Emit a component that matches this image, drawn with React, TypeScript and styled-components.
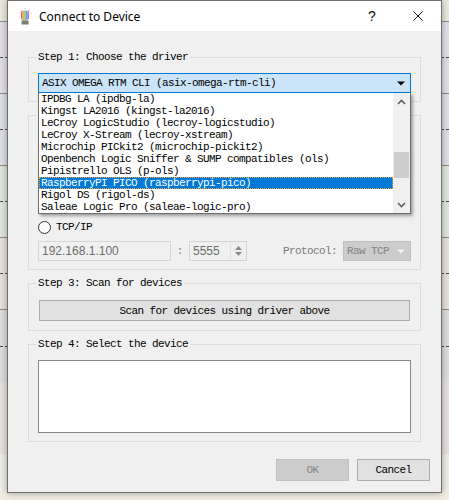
import React from "react";
import styled, {createGlobalStyle} from "styled-components";

const GlobalStyle = createGlobalStyle`
  html, body {
    margin: 0;
    padding: 0;
  }
  body {
    width: 449px;
    height: 500px;
    overflow: hidden;
    font-family: "Liberation Mono", monospace;
  }
`

// Desktop behind the dialog
const Desktop = styled.div`
  position: relative;
  width: 449px;
  height: 500px;
  display: flex;
  flex-direction: column;
  background: #f0eee3;
`

const TopStrip = styled.div`
  height: 22px;
  box-sizing: border-box;
  background: #ebe8dc;
  border-bottom: 1px solid #8c8c8c;
`

const Band = styled.div<{$color: string; $solid?: boolean}>`
  height: 72px;
  box-sizing: border-box;
  background: ${({$color}) => $color};
  border-bottom: ${({$solid}) => ($solid ? "1px solid #8c8c8c" : "none")};
  display: flex;
  flex-direction: column;
  justify-content: center;
`

const Dash = styled.div`
  border-top: 1px dashed #4a4a4a;
`

// Dialog window
const Dialog = styled.div`
  position: absolute;
  left: 7px;
  top: 0;
  width: 435px;
  height: 493px;
  box-sizing: border-box;
  border: 1px solid #6f6f6f;
  background: #f0f0f0;
  display: flex;
  flex-direction: column;
  box-shadow: 0 0 7px rgba(0, 0, 0, 0.35);
`

const TitleBar = styled.div`
  height: 30px;
  background: #ffffff;
  display: flex;
  align-items: center;
`

const TitleIcon = styled.svg`
  margin-left: 9px;
  flex: none;
`

const TitleText = styled.span`
  margin-left: 6px;
  flex: 1;
  font-family: "Noto Sans", "Liberation Sans", sans-serif;
  font-size: 12px;
  color: #000;
`

const TitleButton = styled.div`
  width: 46px;
  height: 30px;
  display: flex;
  align-items: center;
  justify-content: center;
  font-family: "Liberation Sans", sans-serif;
  font-size: 14px;
  color: #111;
`

const Body = styled.div`
  flex: 1;
  display: flex;
  flex-direction: column;
  padding: 20px 11px 11px;
`

const Groups = styled.div`
  margin: 0 9px;
  display: flex;
  flex-direction: column;
  gap: 7px;
`

const Group = styled.fieldset<{$pad: string}>`
  margin: 0;
  min-width: 0;
  border: 1px solid #dcdcdc;
  padding: ${({$pad}) => $pad};
  display: flex;
  flex-direction: column;
`

const Legend = styled.legend`
  height: 12px;
  padding: 0 2px;
  margin-left: -2px;
  font-size: 11px;
  line-height: 12px;
  letter-spacing: -0.6px;
  color: #000;
`

const Mono = styled.span`
  font-size: 11px;
  letter-spacing: -0.6px;
  white-space: nowrap;
  color: #000;
`

// Driver combo + open popup
const ComboWrap = styled.div`
  position: relative;
`

const DriverCombo = styled.div`
  height: 20px;
  box-sizing: border-box;
  border: 1px solid #0078d7;
  background: #cce4f7;
  display: flex;
  align-items: center;
  padding: 0 5px 0 3px;
  justify-content: space-between;
`

const Popup = styled.div`
  position: absolute;
  top: 100%;
  left: 0;
  right: 0;
  height: 121px;
  box-sizing: border-box;
  border: 1px solid #6e6e6e;
  border-top: none;
  background: #fff;
  display: flex;
  box-shadow: 2px 2px 3px rgba(0, 0, 0, 0.35);
  z-index: 10;
`

const Items = styled.div`
  flex: 1;
  min-width: 0;
  display: flex;
  flex-direction: column;
`

const Item = styled.div<{$selected?: boolean}>`
  height: 12px;
  line-height: 12px;
  padding-left: 2px;
  font-size: 11px;
  letter-spacing: -0.6px;
  white-space: nowrap;
  overflow: hidden;
  color: ${({$selected}) => ($selected ? "#fff" : "#000")};
  background: ${({$selected}) => ($selected ? "#0078d7" : "transparent")};
  outline: ${({$selected}) => ($selected ? "1px dotted #f2a33a" : "none")};
  outline-offset: -1px;
`

const ScrollBar = styled.div`
  width: 17px;
  flex: none;
  background: #f0f0f0;
  display: flex;
  flex-direction: column;
`

const ScrollArrow = styled.div`
  height: 17px;
  display: flex;
  align-items: center;
  justify-content: center;
`

const Track = styled.div`
  flex: 1;
`

const Thumb = styled.div`
  margin: 42px 1px 0;
  height: 26px;
  background: #cdcdcd;
`

// Interface rows (the upper ones sit under the open popup)
const HiddenRows = styled.div`
  height: 91px;
`

const RadioRow = styled.div`
  height: 14px;
  display: flex;
  align-items: center;
  gap: 5px;
`

const Radio = styled.span`
  width: 13px;
  height: 13px;
  box-sizing: border-box;
  border-radius: 50%;
  border: 1px solid #333;
  background: #fff;
`

const FieldRow = styled.div`
  height: 20px;
  margin-top: 7px;
  display: flex;
  align-items: stretch;
`

const TextBox = styled.div<{$width: number}>`
  width: ${({$width}) => $width}px;
  box-sizing: border-box;
  border: 1px solid #d5d5d5;
  background: #f0f0f0;
  display: flex;
  align-items: center;
  padding-left: 3px;
  font-family: "Liberation Sans", sans-serif;
  font-size: 12px;
  color: #6d6d6d;
`

const Colon = styled.span`
  width: 18px;
  display: flex;
  align-items: center;
  justify-content: center;
  font-size: 11px;
  color: #7a7a7a;
`

const SpinButtons = styled.div`
  margin-left: auto;
  width: 14px;
  margin-right: 1px;
  border-left: 1px solid #e2e2e2;
  display: flex;
  flex-direction: column;
  align-items: center;
  justify-content: center;
  gap: 2px;
  align-self: stretch;
`

const FieldLabel = styled.span`
  margin-left: auto;
  margin-right: 6px;
  display: flex;
  align-items: center;
  font-size: 11px;
  letter-spacing: -0.6px;
  color: #7a7a7a;
`

const SelectBox = styled.div<{$width: number}>`
  width: ${({$width}) => $width}px;
  box-sizing: border-box;
  border: 1px solid #bfbfbf;
  background: #cccccc;
  display: flex;
  align-items: center;
  justify-content: space-between;
  padding: 0 5px 0 3px;
  font-size: 11px;
  letter-spacing: -0.6px;
  color: #838383;
`

const WideButton = styled.div`
  height: 21px;
  margin: 0 1px;
  box-sizing: border-box;
  border: 1px solid #adadad;
  background: #e1e1e1;
  display: flex;
  align-items: center;
  justify-content: center;
  font-size: 11px;
  letter-spacing: -0.6px;
`

const DeviceList = styled.div`
  height: 73px;
  box-sizing: border-box;
  border: 1px solid #828790;
  background: #fff;
`

const ButtonRow = styled.div`
  margin-top: 17px;
  display: flex;
  justify-content: flex-end;
  gap: 8px;
`

const DialogButton = styled.div<{$disabled?: boolean}>`
  width: 73px;
  height: 22px;
  box-sizing: border-box;
  border: 1px solid ${({$disabled}) => ($disabled ? "#bfbfbf" : "#adadad")};
  background: ${({$disabled}) => ($disabled ? "#cccccc" : "#e1e1e1")};
  color: ${({$disabled}) => ($disabled ? "#838383" : "#000")};
  display: flex;
  align-items: center;
  justify-content: center;
  font-size: 11px;
  letter-spacing: -0.6px;
`

const drivers = [
    "IPDBG LA (ipdbg-la)",
    "Kingst LA2016 (kingst-la2016)",
    "LeCroy LogicStudio (lecroy-logicstudio)",
    "LeCroy X-Stream (lecroy-xstream)",
    "Microchip PICkit2 (microchip-pickit2)",
    "Openbench Logic Sniffer & SUMP compatibles (ols)",
    "Pipistrello OLS (p-ols)",
    "RaspberryPI PICO (raspberrypi-pico)",
    "Rigol DS (rigol-ds)",
    "Saleae Logic Pro (saleae-logic-pro)",
]

const Triangle = ({color}: {color: string}) => (
    <svg width="8" height="5" viewBox="0 0 8 5">
        <path d="M0 0.5h8L4 4.5z" fill={color}/>
    </svg>
)

const Chevron = ({up}: {up?: boolean}) => (
    <svg width="9" height="6" viewBox="0 0 9 6">
        <path d={up ? "M1 5L4.5 1.5L8 5" : "M1 1L4.5 4.5L8 1"} fill="none" stroke="#606060" strokeWidth="1.6"/>
    </svg>
)

const AppIcon = () => (
    <TitleIcon width="16" height="17" viewBox="0 0 16 17">
        <path d="M3 2l1.5 1M13 2l-1.5 1M8 0v1.5M1.5 5h1.5M14.5 5h-1.5" stroke="#c8c8c8" strokeWidth="1"/>
        <rect x="4" y="3" width="1.6" height="8" fill="#e06666"/>
        <rect x="5.6" y="3" width="1.6" height="8" fill="#f1b85a"/>
        <rect x="7.2" y="3" width="1.6" height="8" fill="#7dcf6e"/>
        <rect x="8.8" y="3" width="1.6" height="8" fill="#6aa0e8"/>
        <rect x="10.4" y="3" width="1.6" height="8" fill="#b27ad0"/>
        <path d="M4 3q4 -2 8 0" fill="#e0e0e0"/>
        <rect x="5" y="11" width="6" height="1.5" fill="#b4b4a8"/>
        <rect x="4.5" y="12.5" width="7" height="4" fill="#7d7d70"/>
    </TitleIcon>
)

const CloseIcon = () => (
    <svg width="10" height="10" viewBox="0 0 10 10">
        <path d="M0.5 0.5L9.5 9.5M9.5 0.5L0.5 9.5" stroke="#111" strokeWidth="1"/>
    </svg>
)

const App = () => (
    <>
        <GlobalStyle/>
        <Desktop>
            <TopStrip/>
            <Band $color="#e3dde8" $solid><Dash/></Band>
            <Band $color="#dde0e8" $solid><Dash/></Band>
            <Band $color="#dfe7dc" $solid><Dash/></Band>
            <Band $color="#e8e1da" $solid><Dash/></Band>
            <Band $color="#dedede"><Dash/></Band>
            <Band $color="#eadfdf"/>

            <Dialog>
                <TitleBar>
                    <AppIcon/>
                    <TitleText>Connect to Device</TitleText>
                    <TitleButton>?</TitleButton>
                    <TitleButton><CloseIcon/></TitleButton>
                </TitleBar>

                <Body>
                    <Groups>
                        <Group $pad="10px 9px 8px">
                            <Legend>Step 1: Choose the driver</Legend>
                            <ComboWrap>
                                <DriverCombo>
                                    <Mono>ASIX OMEGA RTM CLI (asix-omega-rtm-cli)</Mono>
                                    <Triangle color="#000"/>
                                </DriverCombo>
                                <Popup>
                                    <Items>
                                        {drivers.map((d, i) => (
                                            <Item key={d} $selected={i === 7}>{d}</Item>
                                        ))}
                                    </Items>
                                    <ScrollBar>
                                        <ScrollArrow><Chevron up/></ScrollArrow>
                                        <Track><Thumb/></Track>
                                        <ScrollArrow><Chevron/></ScrollArrow>
                                    </ScrollBar>
                                </Popup>
                            </ComboWrap>
                        </Group>

                        <Group $pad="8px 9px 8px">
                            <Legend/>
                            <HiddenRows/>
                            <RadioRow><Radio/><Mono>TCP/IP</Mono></RadioRow>
                            <FieldRow>
                                <TextBox $width={133}>192.168.1.100</TextBox>
                                <Colon>:</Colon>
                                <TextBox $width={58}>
                                    5555
                                    <SpinButtons>
                                        <svg width="7" height="4" viewBox="0 0 7 4"><path d="M0 4h7L3.5 0z" fill="#8a8a8a"/></svg>
                                        <svg width="7" height="4" viewBox="0 0 7 4"><path d="M0 0h7L3.5 4z" fill="#8a8a8a"/></svg>
                                    </SpinButtons>
                                </TextBox>
                                <FieldLabel>Protocol:</FieldLabel>
                                <SelectBox $width={68}>
                                    Raw TCP
                                    <Triangle color="#f4f4f4"/>
                                </SelectBox>
                            </FieldRow>
                        </Group>

                        <Group $pad="11px 9px 9px">
                            <Legend>Step 3: Scan for devices</Legend>
                            <WideButton>Scan for devices using driver above</WideButton>
                        </Group>

                        <Group $pad="10px 9px 8px">
                            <Legend>Step 4: Select the device</Legend>
                            <DeviceList/>
                        </Group>
                    </Groups>

                    <ButtonRow>
                        <DialogButton $disabled>OK</DialogButton>
                        <DialogButton>Cancel</DialogButton>
                    </ButtonRow>
                </Body>
            </Dialog>
        </Desktop>
    </>
)

export default App
